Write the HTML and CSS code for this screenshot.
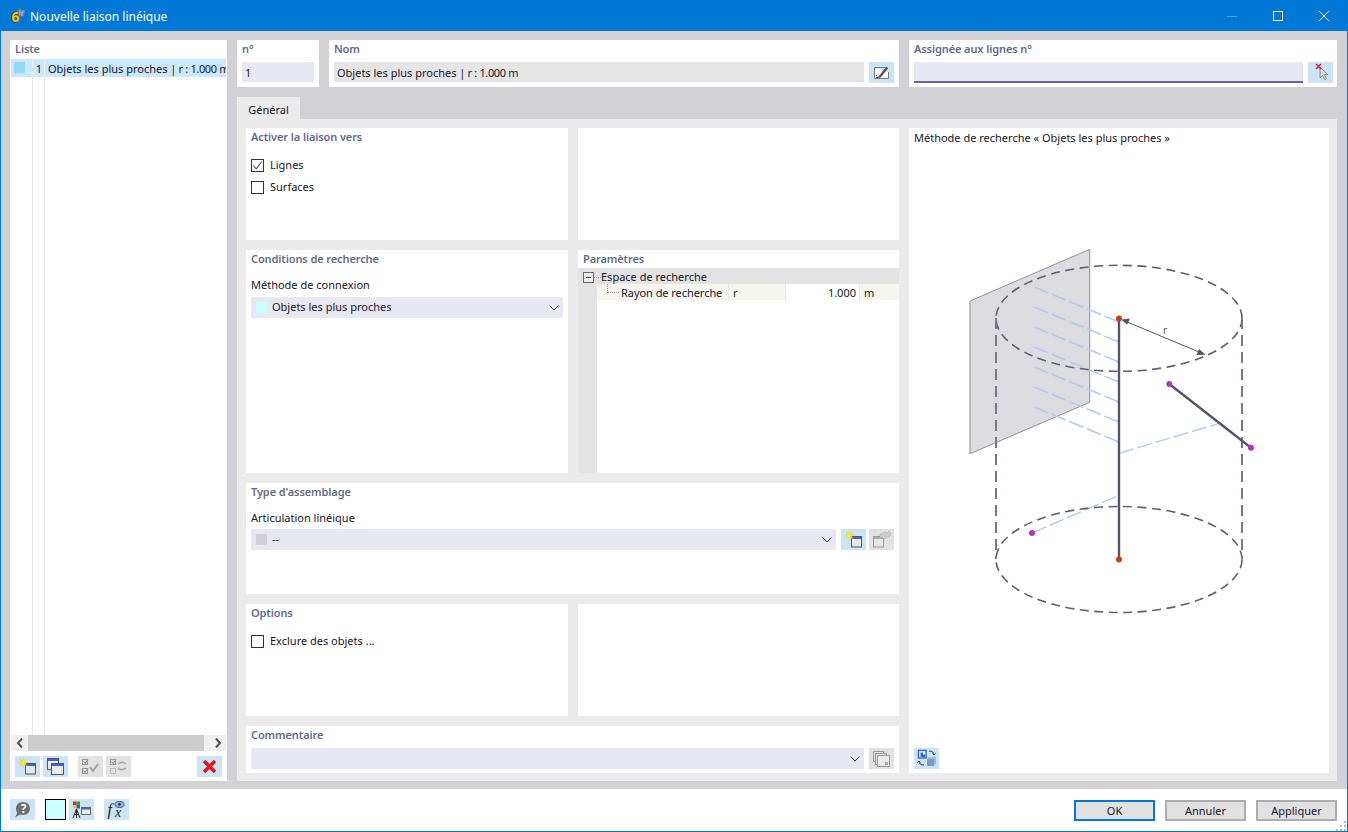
FILE: index.html
```html
<!DOCTYPE html>
<html lang="fr">
<head>
<meta charset="utf-8">
<title>Nouvelle liaison linéique</title>
<link rel="stylesheet" href="styles.css">
</head>
<body>
<svg class="defs" width="0" height="0" aria-hidden="true">
  <defs>
    <symbol id="i-new" viewBox="0 0 25 21">
      <rect x="10.500" y="7.500" width="10" height="10.500" fill="#e8e8e8" stroke="#555"/>
      <rect x="11" y="8" width="9" height="2" fill="#3f62d8"/>
      <path d="M13.500 6.500L10.300 7.300 12 10 9.300 8.300 8.500 11.500 7.700 8.300 5 10 6.700 7.300 3.500 6.500 6.700 5.700 5 3 7.700 4.700 8.500 1.500 9.300 4.700 12 3 10.300 5.700z" fill="#ffee22" stroke="#d8c400" stroke-width=".3"/>
    </symbol>
    <symbol id="i-new-off" viewBox="0 0 25 21">
      <rect x="4.500" y="7.500" width="10" height="10.500" fill="#e6e6e6" stroke="#999"/>
      <rect x="5" y="8" width="9" height="2" fill="#aaa"/>
      <path d="M11 5l5-2 2 1 2-2 2 2-1 3-3 1-2 2-5-2z" fill="#cfcfcf" stroke="#aaa" stroke-width=".6"/>
    </symbol>
    <symbol id="i-copy" viewBox="0 0 25 21">
      <rect x="4.500" y="2.500" width="11" height="11" fill="#eee" stroke="#555"/>
      <rect x="5" y="3" width="10" height="2" fill="#3f62d8"/>
      <rect x="8.500" y="7.500" width="12" height="11" fill="#e8e8e8" stroke="#555"/>
      <rect x="9" y="8" width="11" height="2" fill="#3f62d8"/>
    </symbol>
    <symbol id="i-checks" viewBox="0 0 25 21">
      <rect x="4.500" y="3.500" width="5" height="5" fill="none" stroke="#999"/>
      <rect x="4.500" y="12.500" width="5" height="5" fill="none" stroke="#999"/>
      <path d="M5.500 5.500l1.500 2 3-4M5.500 14.500l1.500 2 3-4" fill="none" stroke="#888"/>
      <path d="M12 11l3 4 5-7" fill="none" stroke="#a0a0a0" stroke-width="2"/>
    </symbol>
    <symbol id="i-swap" viewBox="0 0 25 21">
      <rect x="4.500" y="3.500" width="5" height="5" fill="none" stroke="#999"/>
      <rect x="4.500" y="12.500" width="5" height="5" fill="none" stroke="#bbb"/>
      <path d="M5.500 5.500l1.500 2 3-4" fill="none" stroke="#888"/>
      <path d="M12 8c3-2 6-2 8 0M20 12c-3 2-6 2-8 0" fill="none" stroke="#aaa" stroke-width="1.600"/>
    </symbol>
    <symbol id="i-del" viewBox="0 0 25 21">
      <path d="M7 5l11 11M18 5L7 16" stroke="#ee1111" stroke-width="3.400" fill="none"/>
    </symbol>
    <symbol id="i-help" viewBox="0 0 25 21">
      <path d="M13 3c4 0 7 2.800 7 6.500S17 16 13 16c-1 0-2-.2-2.800-.5L5 18.500l2.300-4.500C6.500 12.800 6 11 6 9.500 6 5.800 9 3 13 3z" fill="#6e6e6e"/>
      <text x="13.500" y="14" class="help-q">?</text>
    </symbol>
    <symbol id="i-colors" viewBox="0 0 25 21">
      <rect x="4" y="2.500" width="3.500" height="3.500" fill="#e22"/>
      <rect x="7.500" y="2.500" width="3.500" height="3.500" fill="#2a2"/>
      <rect x="4" y="6" width="3.500" height="3.500" fill="#fc0"/>
      <rect x="7.500" y="6" width="3.500" height="3.500" fill="#26d"/>
      <path d="M7.500 10L4 19M7.500 10L11 19M5 15.500h5M7.500 10v9" stroke="#222" fill="none"/>
      <rect x="12.500" y="8.500" width="9" height="7" fill="#eee" stroke="#666"/>
      <rect x="13" y="9" width="8" height="1.500" fill="#3f62d8"/>
    </symbol>
    <symbol id="i-fx" viewBox="0 0 25 21">
      <text x="3.500" y="16" class="fx-f">f</text>
      <text x="11" y="18" class="fx-x">x</text>
      <ellipse cx="15.500" cy="5.500" rx="4.500" ry="3" fill="#9fb4dc" stroke="#39507f"/>
      <circle cx="15.500" cy="5.500" r="1.400" fill="#24365f"/>
    </symbol>
    <symbol id="i-pick" viewBox="0 0 25 21">
      <path d="M12 5l0 11 2.600-2.400 2 4 1.800-.9-2-3.900 3.300-.3z" fill="#ddd" stroke="#777" stroke-width=".8"/>
      <path d="M8 2l5 5M13 2L8 7" stroke="#e01030" stroke-width="1.400"/>
    </symbol>
    <symbol id="i-edit" viewBox="0 0 25 21">
      <path d="M5.500 5.500h11M5.500 5.500v11h14V10" fill="#fff" stroke="#777"/>
      <path d="M10 14l7.500-9 1.500 1.200-7.500 9-2.200.6z" fill="#555" stroke="#333" stroke-width=".4"/>
      <path d="M7 15.500h2M7 13.500h1" stroke="#333"/>
    </symbol>
    <symbol id="i-copy-off" viewBox="0 0 25 21">
      <rect x="4.500" y="3.500" width="10" height="10" fill="none" stroke="#999"/>
      <rect x="6.500" y="5.500" width="11" height="11" fill="#e4e4e4" stroke="#999"/>
      <rect x="8.500" y="7.500" width="12" height="11" fill="#eaeaea" stroke="#999"/>
      <rect x="16" y="14" width="3" height="3" fill="#aaa"/>
    </symbol>
    <symbol id="i-view" viewBox="0 0 25 21">
      <rect x="4.500" y="2.500" width="7.500" height="7.500" fill="#fff" stroke="#2e62d0" stroke-width="1.400"/>
      <path d="M6.500 4.500h2.500v2h2v2.500h-4.500z" fill="#2e62d0"/>
      <rect x="13" y="11" width="7" height="7" fill="#7f9cc2"/>
      <path d="M13 11l2-2h7l-2 2zM20 11l2-2v7l-2 2z" fill="#a2b8d6"/>
      <path d="M15 3c3 0 5 1.500 5 4M20 7l-1.500-1.500M20 7l1.500-1.500M10 17c-3 0-5-1-5-4M5 13l-1.500 1.500M5 13l1.500 1.500" fill="none" stroke="#333"/>
    </symbol>
    <symbol id="i-chev" viewBox="0 0 10 6">
      <path d="M.5.500L5 5 9.500.500" fill="none" stroke="#444"/>
    </symbol>
  </defs>
</svg>

<div class="window">
  <header class="titlebar">
    <svg class="app-icon" viewBox="0 0 17 17" width="17" height="17">
      <path d="M6 4.500L11 1l5 2-1.500 5.500L10 8z" fill="#6d7fa3"/>
      <path d="M8 3l6 5M11 1.500l-1 6M14 2l-1.500 6M7 5l8.500-1" stroke="#c3cfe3" stroke-width=".5"/>
      <text x="6.500" y="14" class="app-six">6</text>
    </svg>
    <span class="title-text">Nouvelle liaison linéique</span>
    <div class="win-buttons">
      <svg class="win-btn" viewBox="0 0 46 30"><path d="M18 15.500h10" stroke="#4c9be0"/></svg>
      <svg class="win-btn" viewBox="0 0 46 30"><rect x="18.500" y="10.500" width="9" height="9" fill="none" stroke="#fff"/></svg>
      <svg class="win-btn" viewBox="0 0 46 30"><path d="M18 10l10 10M28 10L18 20" stroke="#fff" fill="none"/></svg>
    </div>
  </header>

  <div class="main">
    <aside class="panel list-panel">
      <div class="label list-label">Liste</div>
      <div class="list">
        <div class="list-row">
          <span class="swatch swatch-list"></span>
          <span class="list-num">1</span>
          <span class="list-text">Objets les plus proches <span class="tail">| r : 1.000 m</span></span>
        </div>
      </div>
      <div class="scrollbar">
        <span class="scroll-btn"><svg viewBox="0 0 8 12" width="8" height="12"><path d="M6 1.500L2 6l4 4.500" fill="none" stroke="#555" stroke-width="2"/></svg></span>
        <span class="scroll-track"><span class="scroll-thumb"></span></span>
        <span class="scroll-btn"><svg viewBox="0 0 8 12" width="8" height="12"><path d="M2 1.500L6 6l-4 4.500" fill="none" stroke="#555" stroke-width="2"/></svg></span>
      </div>
      <div class="toolbar">
        <span class="btn"><svg><use href="#i-new"/></svg></span>
        <span class="btn"><svg><use href="#i-copy"/></svg></span>
        <span class="btn btn-off btn-sep"><svg><use href="#i-checks"/></svg></span>
        <span class="btn btn-off"><svg><use href="#i-swap"/></svg></span>
        <span class="btn btn-end"><svg><use href="#i-del"/></svg></span>
      </div>
    </aside>

    <div class="content">
      <div class="top-row">
        <section class="panel">
          <div class="label">n°</div>
          <div class="top-fields"><div class="field field-blue">1</div></div>
        </section>
        <section class="panel">
          <div class="label">Nom</div>
          <div class="top-fields">
            <div class="field field-gray grow">Objets les plus proches <span class="tail">| r : 1.000 m</span></div>
            <span class="btn"><svg><use href="#i-edit"/></svg></span>
          </div>
        </section>
        <section class="panel">
          <div class="label">Assignée aux lignes n°</div>
          <div class="top-fields top-fields-wide">
            <div class="field field-blue field-active grow"></div>
            <span class="btn"><svg><use href="#i-pick"/></svg></span>
          </div>
        </section>
      </div>

      <div class="tabs"><div class="tab">Général</div></div>

      <div class="tab-body">
        <div class="form-grid">
          <section class="panel pad">
            <div class="label">Activer la liaison vers</div>
            <div class="checks">
              <div class="check-row"><span class="checkbox"><svg viewBox="0 0 13 13" width="11" height="11"><path d="M1.500 6.500l3.500 4 6.500-8.500" fill="none" stroke="#555" stroke-width="1.300"/></svg></span>Lignes</div>
              <div class="check-row"><span class="checkbox"></span>Surfaces</div>
            </div>
          </section>
          <section class="panel"></section>

          <section class="panel pad">
            <div class="label">Conditions de recherche</div>
            <div class="field-label">Méthode de connexion</div>
            <div class="select select-gap">
              <span class="swatch swatch-cyan"></span><span class="grow select-text">Objets les plus proches</span>
              <svg class="chev"><use href="#i-chev"/></svg>
            </div>
          </section>

          <section class="panel params">
            <div class="label param-label">Paramètres</div>
            <div class="param-table">
              <div class="param-head">
                <svg class="tree-box" viewBox="0 0 11 11" width="11" height="11"><rect x=".5" y=".5" width="10" height="10" fill="#eee" stroke="#666"/><path d="M3 5.500h5" stroke="#222"/></svg>
                <span class="tree-dots"></span>
                <span>Espace de recherche</span>
              </div>
              <div class="param-row">
                <span class="cell cell-name"><span class="tree-elbow"></span>Rayon de recherche</span>
                <span class="cell cell-sym">r</span>
                <span class="cell cell-val">1.000</span>
                <span class="cell cell-unit">m</span>
              </div>
            </div>
          </section>

          <section class="panel pad span2">
            <div class="label">Type d'assemblage</div>
            <div class="field-label">Articulation linéique</div>
            <div class="select-row select-row-tight">
              <div class="select grow">
                <span class="swatch swatch-gray"></span><span class="grow select-text">--</span>
                <svg class="chev"><use href="#i-chev"/></svg>
              </div>
              <span class="btn"><svg><use href="#i-new"/></svg></span>
              <span class="btn btn-off"><svg><use href="#i-new-off"/></svg></span>
            </div>
          </section>

          <section class="panel pad">
            <div class="label">Options</div>
            <div class="checks">
              <div class="check-row"><span class="checkbox"></span>Exclure des objets ...</div>
            </div>
          </section>
          <section class="panel"></section>

          <section class="panel pad span2">
            <div class="label">Commentaire</div>
            <div class="select-row select-row-comment">
              <div class="select grow"><span class="grow"></span><svg class="chev"><use href="#i-chev"/></svg></div>
              <span class="btn btn-off"><svg><use href="#i-copy-off"/></svg></span>
            </div>
          </section>
        </div>

        <section class="panel diagram-panel">
          <div class="diagram-title">Méthode de recherche « Objets les plus proches »</div>
          <svg class="diagram" viewBox="909 148 420 595">
            <polygon points="970,301 1089.700,249.300 1089.700,402.300 970,453.700" fill="#dcdce0" stroke="#8f8f98"/>
            <g class="beams">
              <path d="M1034.300 287L1119 322M1034.300 307L1119 342M1034.300 327L1119 362M1034.300 347L1119 382M1034.300 367L1119 402M1034.300 387L1119 422M1034.300 407L1119 442"/>
              <path d="M1119 453.300L1219.300 423.300"/>
              <path d="M1116 496.700L1032 533"/>
            </g>
            <g class="dashed">
              <ellipse cx="1119" cy="318.300" rx="123" ry="53"/>
              <ellipse cx="1119" cy="559.500" rx="123" ry="53"/>
              <path d="M996 318V559M1242 318V559" class="dashed-side"/>
            </g>
            <path d="M1119 318.500V559.500" class="member"/>
            <path d="M1169.300 384L1251 447.700" class="member"/>
            <path d="M1126 321.500L1199 352" class="dim"/>
            <path d="M1121 319.500l9-1-2.800 6zM1205.500 354.700l-9 .4 2.500-6.200z" fill="#555566"/>
            <text x="1163" y="334" class="dim-text">r</text>
            <circle cx="1119" cy="318.500" r="3" fill="#c93c10"/>
            <circle cx="1119" cy="559.500" r="3" fill="#d23c10"/>
            <circle cx="1169.300" cy="384" r="3" fill="#b52fc4"/>
            <circle cx="1251" cy="447.700" r="3" fill="#b52fc4"/>
            <circle cx="1032" cy="533" r="3" fill="#b52fc4"/>
          </svg>
          <div class="diagram-foot"><span class="btn"><svg><use href="#i-view"/></svg></span></div>
        </section>
      </div>
    </div>
  </div>

  <footer class="footer">
    <span class="btn"><svg><use href="#i-help"/></svg></span>
    <span class="color-box"></span>
    <span class="btn"><svg><use href="#i-colors"/></svg></span>
    <span class="btn btn-sep"><svg><use href="#i-fx"/></svg></span>
    <div class="actions">
      <button class="action action-default">OK</button>
      <button class="action">Annuler</button>
      <button class="action">Appliquer</button>
    </div>
    <svg class="grip" viewBox="0 0 11 11" width="11" height="11"><path d="M8 1h2v2H8zM4 5h2v2H4zM8 5h2v2H8zM0 9h2v2H0zM4 9h2v2H4zM8 9h2v2H8z" fill="#b8b8b8"/></svg>
  </footer>
</div>
</body>
</html>
```
FILE: styles.css
```css
* { box-sizing: border-box; }
html, body { margin: 0; padding: 0; }
body {
  font-family: "Noto Sans", "Open Sans", sans-serif;
  font-size: 11px;
  line-height: 18px;
  color: #16162a;
  background: #fff;
}
.defs { position: absolute; }
.grow { flex: 1 1 0; min-width: 0; }
.tail { letter-spacing: -0.35px; }

.window {
  width: 1348px;
  height: 832px;
  border: 1px solid #0078d7;
  display: flex;
  flex-direction: column;
  overflow: hidden;
}

.titlebar {
  height: 30px;
  flex: none;
  background: #0078d7;
  color: #fff;
  display: flex;
  align-items: center;
  padding-left: 8px;
}
.app-icon { flex: none; }
.app-six {
  font-size: 14px;
  font-weight: 700;
  text-anchor: middle;
  fill: #f3c81e;
  stroke: #4a3c08;
  stroke-width: 1.200px;
  paint-order: stroke;
}
.title-text { font-size: 12px; margin-left: 4px; flex: 1; padding-top: 1px; }
.win-buttons { display: flex; }
.win-btn { width: 46px; height: 30px; display: block; }

.main {
  height: 758px;
  flex: none;
  background: #d1d1d6;
  padding: 9px 10px 8px 9px;
  display: grid;
  grid-template-columns: 217px 1100px;
  column-gap: 10px;
}

.panel { background: #fff; min-width: 0; }
.label {
  color: #5f6b8c;
  font-weight: 600;
  height: 18px;
  padding-left: 5px;
  letter-spacing: -0.1px;
}
.pad .label { padding-left: 0; }
.pad { padding: 0 5px; }

.list-panel {
  display: flex;
  flex-direction: column;
  padding: 0 1px;
  height: 741px;
}
.list-label { padding-left: 4px; }
.list {
  flex: 1;
  padding-top: 1px;
  min-height: 0;
  background:
    linear-gradient(#e9e9e9, #e9e9e9) 21px 0 / 1px 100% no-repeat,
    linear-gradient(#e9e9e9, #e9e9e9) 33px 0 / 1px 100% no-repeat;
}
.list-row {
  height: 18px;
  line-height: 20px;
  background:
    linear-gradient(#e6f1fa, #e6f1fa) 21px 0 / 1px 100% no-repeat,
    linear-gradient(#e6f1fa, #e6f1fa) 33px 0 / 1px 100% no-repeat,
    #cce8ff;
  display: flex;
  align-items: flex-start;
  padding-left: 3px;
  white-space: nowrap;
  overflow: hidden;
}
.swatch { display: block; width: 11px; height: 11px; flex: none; }
.swatch-list { background: #95d7f7; margin-top: 3px; }
.swatch-cyan { background: #ccffff; margin-right: 5px; }
.swatch-gray { background: #d0d0d4; margin-right: 5px; }
.list-num { width: 17px; text-align: right; flex: none; }
.list-text { margin-left: 6px; }

.scrollbar {
  height: 16px;
  flex: none;
  display: flex;
  background: #f0f0f0;
}
.scroll-btn {
  width: 17px;
  flex: none;
  display: flex;
  align-items: center;
  justify-content: center;
}
.scroll-track { flex: 1; }
.scroll-thumb { display: block; width: 176px; height: 16px; background: #cdcdcd; }

.toolbar {
  display: flex;
  gap: 3px;
  margin-top: 5px;
  padding: 0 4px 4px;
  flex: none;
}

.btn {
  width: 25px;
  height: 21px;
  flex: none;
  background: #cce4f7;
  display: block;
}
.btn svg { width: 25px; height: 21px; display: block; }
.btn-off { background: #e2e2e2; }
.btn-sep { margin-left: 7px; }
.btn-end { margin-left: auto; }

.content { display: flex; flex-direction: column; min-width: 0; }
.top-row {
  display: grid;
  grid-template-columns: 82px 570px 428px;
  column-gap: 10px;
  height: 47px;
  flex: none;
}
.top-fields {
  display: flex;
  gap: 5px;
  padding: 4px 5px 0;
}
.top-fields-wide { padding-right: 4px; }
.field {
  height: 20px;
  line-height: 20px;
  padding: 1px 0 0 3px;
  width: 100%;
}
.field.grow { width: auto; }
.field-blue { background: #e8e8f2; }
.field-gray { background: #e5e5e5; }
.field-active { height: 21px; border-bottom: 2px solid #6464a8; }

.tabs { height: 32px; flex: none; padding-top: 10px; display: flex; }
.tab {
  width: 63px;
  height: 22px;
  background: #ebebeb;
  text-align: center;
  padding-top: 3px;
  line-height: 20px;
}

.tab-body {
  height: 662px;
  flex: none;
  background: #ebebeb;
  padding: 9px 8px 8px 9px;
  display: grid;
  grid-template-columns: 653px 420px;
  column-gap: 10px;
}

.form-grid {
  display: grid;
  grid-template-columns: 322px 321px;
  grid-template-rows: 112px 223px 111px 112px 47px;
  gap: 10px;
}
.span2 { grid-column: span 2; }

.checks { margin-top: 8px; }
.check-row { height: 22px; display: flex; align-items: center; }
.checkbox {
  width: 13px;
  height: 13px;
  border: 1px solid #333;
  background: #fff;
  margin-right: 6px;
  flex: none;
  display: flex;
  align-items: center;
  justify-content: center;
}

.field-label { margin-top: 8px; height: 18px; }
.select {
  height: 21px;
  background: #e8e8f2;
  display: flex;
  align-items: center;
  padding: 0 5px;
}
.select-text { margin-top: -1px; }
.select-gap { margin-top: 3px; }
.chev { width: 10px; height: 6px; flex: none; margin-right: -1px; }
.select-row { display: flex; gap: 5px; }
.select-row .btn + .btn { margin-left: -2px; }
.select-row-tight { margin-top: 2px; }
.select-row-comment { margin-top: 4px; }

.params { display: flex; flex-direction: column; }
.param-table {
  flex: 1;
  background: linear-gradient(#e3e3e3, #e3e3e3) 0 0 / 19px 100% no-repeat;
}
.param-head {
  height: 16px;
  background: #e3e3e3;
  display: flex;
  align-items: center;
  padding: 2px 0 0 5px;
}
.tree-box { flex: none; }
.tree-dots { width: 7px; border-top: 1px dotted #999; flex: none; }
.param-row {
  height: 16px;
  margin-left: 19px;
  display: grid;
  grid-template-columns: 132px 57px 74px 39px;
  background: #f6f6ef;
}
.cell { line-height: 17px; white-space: nowrap; border-right: 1px solid #e8e8e0; }
.cell-name { display: flex; padding-left: 24px; letter-spacing: -0.05px; }
.tree-elbow {
  width: 12px;
  height: 9px;
  margin-left: -14px;
  margin-right: 2px;
  border-left: 1px dotted #999;
  border-bottom: 1px dotted #999;
  flex: none;
}
.cell-sym { padding-left: 4px; }
.cell-val { background: #fff; text-align: right; padding-right: 3px; }
.cell-unit { padding-left: 4px; border-right: 0; }

.diagram-panel { display: flex; flex-direction: column; height: 645px; }
.diagram-title { height: 20px; line-height: 20px; padding-left: 5px; }
.diagram { width: 420px; height: 595px; display: block; flex: none; }
.diagram-foot { padding: 5px 5px 4px; }

.beams path {
  fill: none;
  stroke: #a8cef5;
  stroke-width: 1.400;
  stroke-dasharray: 15 4;
}
.dashed ellipse {
  fill: none;
  stroke: #5f5f70;
  stroke-width: 1.600;
  stroke-dasharray: 9 5.500;
}
.dashed .dashed-side {
  fill: none;
  stroke: #77778a;
  stroke-width: 2;
  stroke-dasharray: 11 6;
}
.member { stroke: #55556a; stroke-width: 2.400; fill: none; }
.dim { stroke: #555566; stroke-width: 1; fill: none; }
.dim-text { font-size: 10px; fill: #555; font-family: "Noto Sans", sans-serif; }
.help-q { font-size: 12px; font-weight: 700; fill: #fff; text-anchor: middle; }
.fx-f { font: italic 16px "Liberation Serif", serif; fill: #222; }
.fx-x { font: italic 14px "Liberation Serif", serif; fill: #222; }

.footer {
  flex: 1;
  background: #fff;
  display: flex;
  align-items: flex-start;
  padding: 10px 10px 0 9px;
  position: relative;
}
.color-box {
  width: 21px;
  height: 21px;
  background: #ccffff;
  border: 1px solid #000;
  margin: 0 3px 0 10px;
  flex: none;
}
.footer .btn-sep { margin-left: 10px; }
.actions { margin-left: auto; display: flex; gap: 10px; padding-top: 1px; }
.action {
  width: 81px;
  height: 21px;
  padding: 0;
  background: #e1e1e1;
  border: 2px solid #adadad;
  font: inherit;
  line-height: 16px;
  color: #16162a;
}
.action-default { border-color: #0078d7; }
.grip { position: absolute; right: 0; bottom: 0; }
```
